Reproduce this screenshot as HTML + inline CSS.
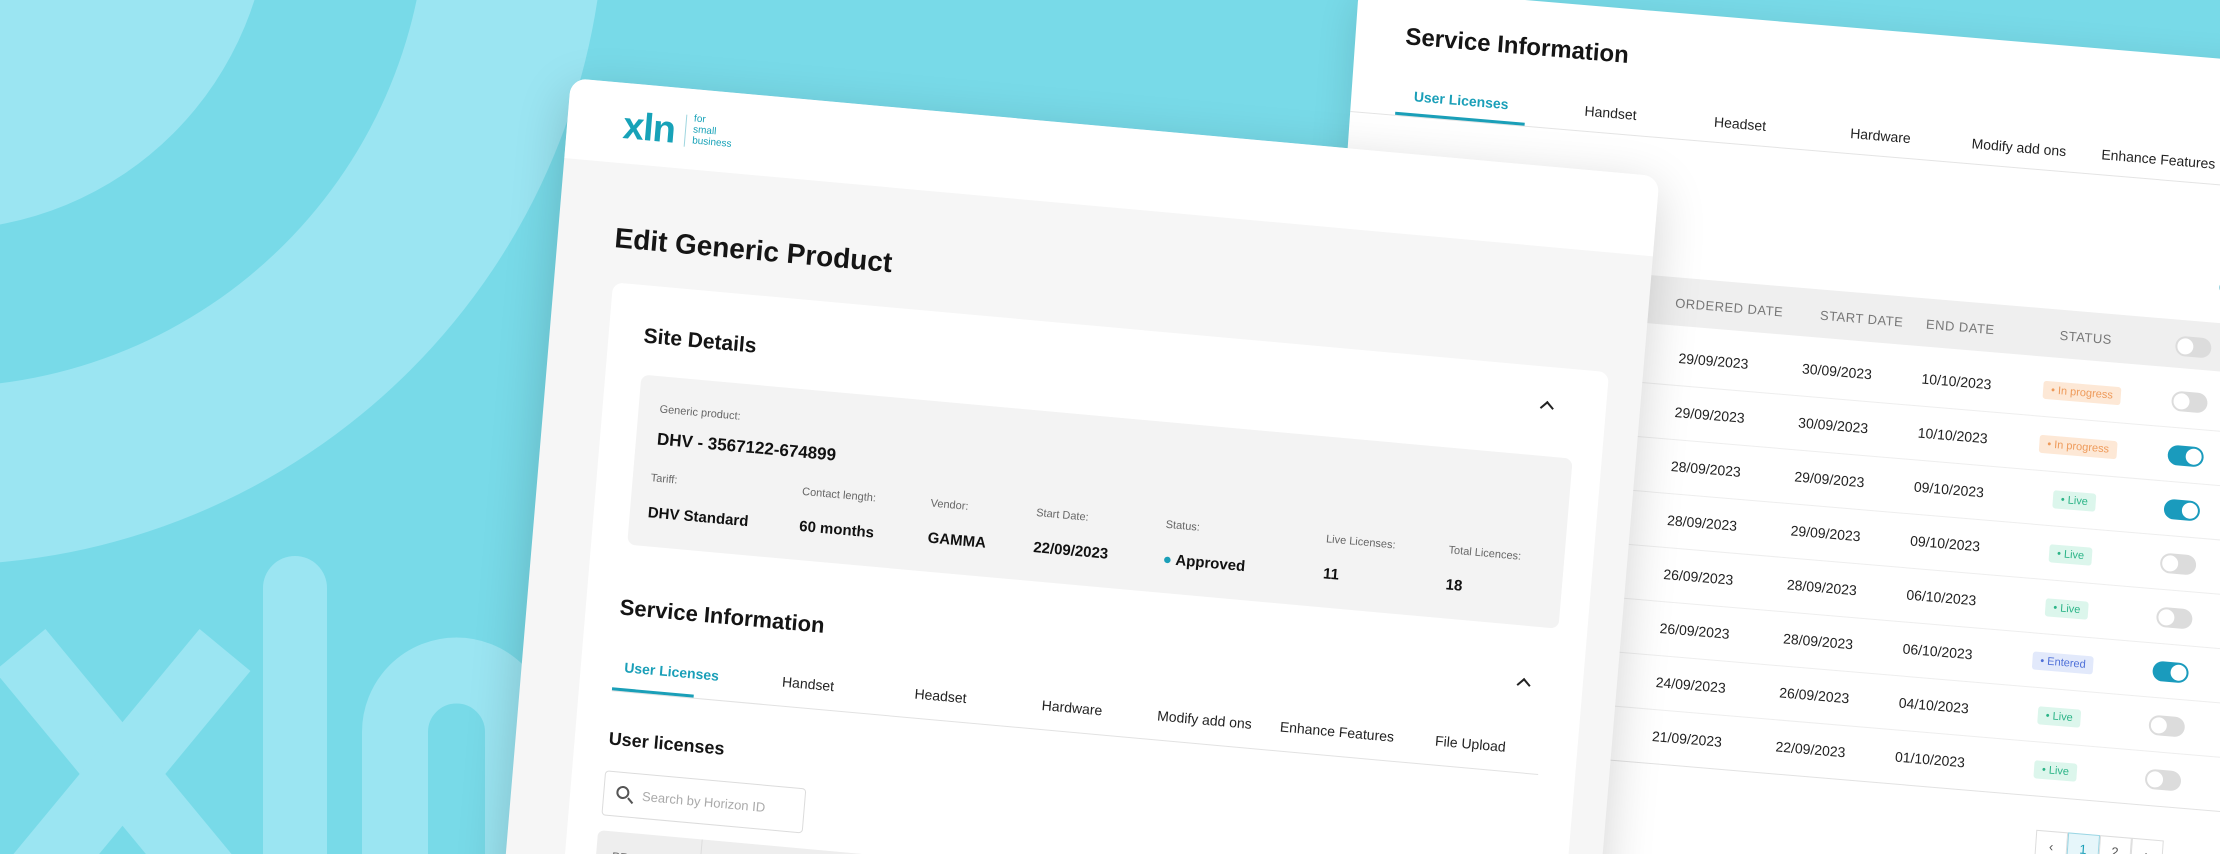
<!DOCTYPE html>
<html style="overflow:hidden;width:2220px;height:854px"><head><meta charset="utf-8"><style>
*{margin:0;padding:0;box-sizing:border-box}
html,body{width:2220px;height:854px;overflow:hidden}
body{background:#78dae8;font-family:"Liberation Sans",sans-serif;color:#151515}
#wrap{position:relative;width:2220px;height:854px;overflow:hidden;background:#78dae8}
.abs{position:absolute}
#bg{position:absolute;left:0;top:0}
.card{position:absolute;transform-origin:0 0;border-radius:16px;overflow:hidden}
#back{left:1359px;top:-14px;width:1000px;height:920px;background:#fff;transform:matrix(0.996,0.084,-0.07,1,0,0);box-shadow:0 10px 40px rgba(0,0,0,.12)}
#front{left:571px;top:78px;width:1093px;height:860px;background:#f6f6f6;transform:matrix(0.996,0.09,-0.084,1,0,0);box-shadow:0 14px 50px rgba(0,0,0,.18)}
.tab{position:absolute;width:140px;text-align:center;font-size:14px;color:#222}
.tab.on{color:#1a9fb8;font-weight:bold}
.lbl{position:absolute;font-size:11px;color:#666}
.val{position:absolute;font-size:15px;font-weight:bold;color:#111}
.th{position:absolute;font-size:13px;color:#777;width:140px;text-align:center;letter-spacing:.5px}
.td{position:absolute;font-size:14px;color:#222;width:140px;text-align:center}
.badge{position:absolute;font-size:11px;padding:3px 8px;border-radius:3px;transform:translateX(-50%)}
.ip{background:#fde8d6;color:#ee9a5a}
.lv{background:#dcf6ec;color:#2bb487}
.en{background:#e2e9fb;color:#4e6fd8}
.tg{position:absolute;width:36px;height:20px;border-radius:10px;background:#dcdcdc}
.tg::after{content:"";position:absolute;left:2px;top:2px;width:16px;height:16px;border-radius:50%;background:#fff}
.tg.on{background:#1a9bbd}
.tg.on::after{left:18px}
.rowline{position:absolute;left:0;width:960px;height:1px;background:#eee}
.chev{position:absolute;width:10px;height:10px;border-left:2.5px solid #222;border-top:2.5px solid #222;transform:rotate(45deg)}
</style></head><body><div id="wrap">
<svg id="bg" width="2220" height="854">
<rect width="2220" height="854" fill="#78dae8"/>
<circle cx="-60" cy="-100" r="665" fill="#9be5f2"/>
<circle cx="-60" cy="-100" r="487" fill="#78dae8"/>
<circle cx="-60" cy="-100" r="330" fill="#9be5f2"/>
<g stroke="#9be5f2" stroke-width="66" fill="none">
<line x1="20" y1="650" x2="235" y2="910"/>
<line x1="225" y1="650" x2="10" y2="910"/>
<path d="M395,900 V732 A61.5,61.5 0 0 1 518,732 V900"/>
</g>
<rect x="263" y="556" width="64" height="360" rx="32" fill="#9be5f2"/>
</svg>

<div id="back" class="card">
  <div class="abs" style="left:50px;top:33px;font-size:24px;font-weight:bold">Service Information</div>
  <div class="tab on" style="left:40px;top:97px">User Licenses</div>
  <div class="tab" style="left:190px;top:97px">Handset</div>
  <div class="tab" style="left:320px;top:97px">Headset</div>
  <div class="tab" style="left:461px;top:97px">Hardware</div>
  <div class="tab" style="left:600px;top:97px">Modify add ons</div>
  <div class="tab" style="left:740px;top:97px">Enhance Features</div>
  <div class="abs" style="left:0;top:125px;width:1000px;height:1px;background:#e4e4e4"></div>
  <div class="abs" style="left:45px;top:122px;width:130px;height:3px;background:#1a9fb8"></div>
  <div class="abs" style="left:880px;top:218px;width:18px;height:18px;border:2px solid #1a9fb8;border-radius:50%"></div>
  <div class="abs" style="left:0;top:263px;width:1000px;height:48px;background:#efefef"></div>
  <div class="th" style="left:322px;top:281px">ORDERED DATE</div>
  <div class="th" style="left:455px;top:281px">START DATE</div>
  <div class="th" style="left:554px;top:281px">END DATE</div>
  <div class="th" style="left:680px;top:281px">STATUS</div>
  <div class="tg" style="left:840px;top:279px"></div>

  <div class="td" style="left:310px;top:335px">29/09/2023</div><div class="td" style="left:434px;top:335px">30/09/2023</div><div class="td" style="left:554px;top:335px">10/10/2023</div><div class="badge ip" style="left:750px;top:335px">• In progress</div><div class="tg" style="left:840px;top:334px"></div>
  <div class="rowline" style="top:370px"></div>
  <div class="td" style="left:310px;top:389px">29/09/2023</div><div class="td" style="left:434px;top:389px">30/09/2023</div><div class="td" style="left:554px;top:389px">10/10/2023</div><div class="badge ip" style="left:750px;top:389px">• In progress</div><div class="tg on" style="left:840px;top:388px"></div>
  <div class="rowline" style="top:424px"></div>
  <div class="td" style="left:310px;top:443px">28/09/2023</div><div class="td" style="left:434px;top:443px">29/09/2023</div><div class="td" style="left:554px;top:443px">09/10/2023</div><div class="badge lv" style="left:750px;top:443px">• Live</div><div class="tg on" style="left:840px;top:442px"></div>
  <div class="rowline" style="top:478px"></div>
  <div class="td" style="left:310px;top:497px">28/09/2023</div><div class="td" style="left:434px;top:497px">29/09/2023</div><div class="td" style="left:554px;top:497px">09/10/2023</div><div class="badge lv" style="left:750px;top:497px">• Live</div><div class="tg" style="left:840px;top:496px"></div>
  <div class="rowline" style="top:532px"></div>
  <div class="td" style="left:310px;top:551px">26/09/2023</div><div class="td" style="left:434px;top:551px">28/09/2023</div><div class="td" style="left:554px;top:551px">06/10/2023</div><div class="badge lv" style="left:750px;top:551px">• Live</div><div class="tg" style="left:840px;top:550px"></div>
  <div class="rowline" style="top:586px"></div>
  <div class="td" style="left:310px;top:605px">26/09/2023</div><div class="td" style="left:434px;top:605px">28/09/2023</div><div class="td" style="left:554px;top:605px">06/10/2023</div><div class="badge en" style="left:750px;top:605px">• Entered</div><div class="tg on" style="left:840px;top:604px"></div>
  <div class="rowline" style="top:640px"></div>
  <div class="td" style="left:310px;top:659px">24/09/2023</div><div class="td" style="left:434px;top:659px">26/09/2023</div><div class="td" style="left:554px;top:659px">04/10/2023</div><div class="badge lv" style="left:750px;top:659px">• Live</div><div class="tg" style="left:840px;top:658px"></div>
  <div class="rowline" style="top:694px"></div>
  <div class="td" style="left:310px;top:713px">21/09/2023</div><div class="td" style="left:434px;top:713px">22/09/2023</div><div class="td" style="left:554px;top:713px">01/10/2023</div><div class="badge lv" style="left:750px;top:713px">• Live</div><div class="tg" style="left:840px;top:712px"></div>
  <div class="rowline" style="top:748px;background:#e2e2e2"></div>
  <div class="abs" style="left:735px;top:782px;display:flex;font-size:13px;color:#555">
    <div style="width:32px;height:32px;border:1px solid #ddd;text-align:center;line-height:30px">‹</div>
    <div style="width:32px;height:32px;border:1px solid #9ad6e4;background:#e6f6fa;color:#1a9fb8;text-align:center;line-height:30px">1</div>
    <div style="width:32px;height:32px;border:1px solid #ddd;text-align:center;line-height:30px">2</div>
    <div style="width:32px;height:32px;border:1px solid #ddd;text-align:center;line-height:30px">›</div>
  </div>
</div>

<div id="front" class="card">
  <div class="abs" style="left:0;top:0;width:1093px;height:80px;background:#fff"></div>
  <div class="abs" style="left:56px;top:22px;font-size:38px;font-weight:bold;color:#17a2b8;letter-spacing:-1px">xln</div>
  <div class="abs" style="left:118px;top:26px;width:1px;height:32px;background:#9fd6e0"></div>
  <div class="abs" style="left:126px;top:24px;font-size:10px;line-height:11px;color:#17a2b8">for<br>small<br>business</div>
  <div class="abs" style="left:57px;top:139px;font-size:28px;font-weight:bold">Edit Generic Product</div>
  <div class="abs" style="left:59px;top:199px;width:1000px;height:700px;background:#fff;border-radius:10px">
    <div class="abs" style="left:35px;top:39px;font-size:21px;font-weight:bold">Site Details</div>
    <div class="chev" style="left:936px;top:36px"></div>
    <div class="abs" style="left:36px;top:89px;width:935px;height:170px;background:#f3f3f3;border-radius:8px">
      <div class="lbl" style="left:21px;top:27px">Generic product:</div>
      <div class="val" style="left:21px;top:53px;font-size:17px">DHV - 3567122-674899</div>
      <div class="lbl" style="left:18px;top:96px">Tariff:</div><div class="val" style="left:18px;top:128px">DHV Standard</div>
      <div class="lbl" style="left:170px;top:96px">Contact length:</div><div class="val" style="left:170px;top:128px">60 months</div>
      <div class="lbl" style="left:299px;top:96px">Vendor:</div><div class="val" style="left:299px;top:128px">GAMMA</div>
      <div class="lbl" style="left:405px;top:96px">Start Date:</div><div class="val" style="left:405px;top:128px">22/09/2023</div>
      <div class="lbl" style="left:535px;top:96px">Status:</div><div class="val" style="left:535px;top:128px"><span style="color:#1a9fb8">●</span> Approved</div>
      <div class="lbl" style="left:696px;top:96px">Live Licenses:</div><div class="val" style="left:696px;top:128px">11</div>
      <div class="lbl" style="left:819px;top:96px">Total Licences:</div><div class="val" style="left:819px;top:128px">18</div>
    </div>
    <div class="abs" style="left:34px;top:309px;font-size:22px;font-weight:bold">Service Information</div>
    <div class="chev" style="left:936px;top:313px"></div>
    <div class="tab on" style="left:21px;top:373px">User Licenses</div>
    <div class="tab" style="left:158px;top:373px">Handset</div>
    <div class="tab" style="left:291px;top:373px">Headset</div>
    <div class="tab" style="left:423px;top:373px">Hardware</div>
    <div class="tab" style="left:556px;top:373px">Modify add ons</div>
    <div class="tab" style="left:689px;top:373px">Enhance Features</div>
    <div class="tab" style="left:823px;top:373px">File Upload</div>
    <div class="abs" style="left:33px;top:405px;width:930px;height:1px;background:#e2e2e2"></div>
    <div class="abs" style="left:33px;top:402px;width:82px;height:3px;background:#1a9fb8"></div>
    <div class="abs" style="left:34px;top:443px;font-size:18px;font-weight:bold">User licenses</div>
    <div class="abs" style="left:33px;top:485px;width:202px;height:45px;border:1px solid #dcdcdc;border-radius:4px;font-size:13px;color:#aaa;line-height:43px;padding-left:38px">Search by Horizon ID
      <div class="abs" style="left:12px;top:13px;width:13px;height:13px;border:2px solid #555;border-radius:50%"></div>
      <div class="abs" style="left:23px;top:26px;width:7px;height:2px;background:#555;transform:rotate(45deg)"></div>
    </div>
    <div class="abs" style="left:31px;top:545px;width:930px;height:56px;background:#eee;border-radius:6px 6px 0 0">
      <div class="abs" style="left:16px;top:18px;font-size:12px;color:#666">PRODUCT ID</div>
      <div class="abs" style="left:104px;top:0;width:1px;height:56px;background:#ddd"></div>
      <div class="abs" style="left:118px;top:18px;font-size:12px;color:#666">HORIZON ID</div>
    </div>
  </div>
</div>
</div></body></html>
